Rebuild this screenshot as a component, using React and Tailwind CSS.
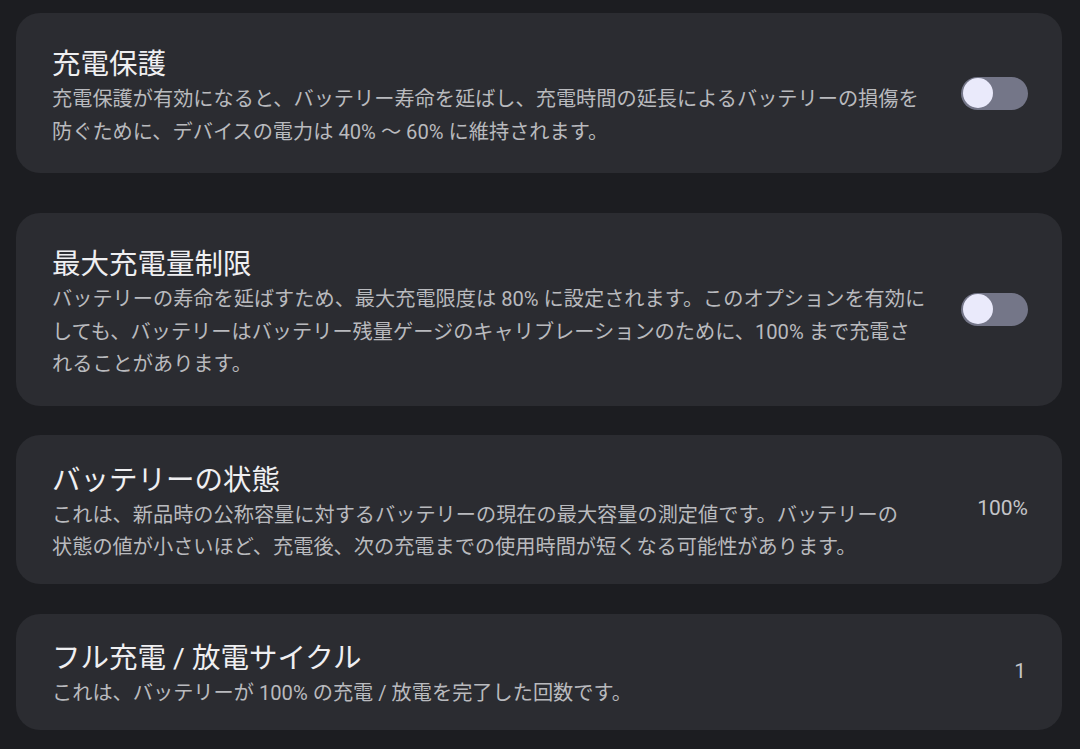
const font = { fontFamily: 'Roboto, "Noto Sans CJK JP", "Noto Sans", sans-serif' };

function Toggle() {
  return (
    <div className="relative h-[33px] w-[67px] shrink-0 rounded-full bg-[#747688]">
      <span className="absolute left-[2px] top-[1.5px] h-[30px] w-[30px] rounded-full bg-[#eaeafb]" />
    </div>
  );
}

function Card({ title, lines, right, className, pad }) {
  return (
    <div className={`flex items-center rounded-[24px] bg-[#2b2c31] pl-9 pr-[34px] ${className}`}>
      <div className={`min-w-0 flex-1 ${pad}`}>
        <div className="text-[28.5px] leading-[36px] text-[#efeff1]">{title}</div>
        <div className="whitespace-nowrap text-[20.2px] leading-[32.5px] text-[#b9babe]">
          {lines.map((l, i) => (
            <div key={i}>{l}</div>
          ))}
        </div>
      </div>
      {right}
    </div>
  );
}

export default function App() {
  return (
    <div className="min-h-screen bg-[#1c1d21] pb-[19px] pl-4 pr-[18px] pt-[13px]" style={font}>
      <Card
        pad="pb-[25px] pt-[34px]"
        title="充電保護"
        lines={[
          "充電保護が有効になると、バッテリー寿命を延ばし、充電時間の延長によるバッテリーの損傷を",
          "防ぐために、デバイスの電力は 40% 〜 60% に維持されます。",
        ]}
        right={<Toggle />}
      />
      <Card
        className="mt-[40px]"
        pad="pb-[25px] pt-[34px]"
        title="最大充電量制限"
        lines={[
          "バッテリーの寿命を延ばすため、最大充電限度は 80% に設定されます。このオプションを有効に",
          "しても、バッテリーはバッテリー残量ゲージのキャリブレーションのために、100% まで充電さ",
          "れることがあります。",
        ]}
        right={<Toggle />}
      />
      <Card
        className="mt-[29px]"
        pad="pb-[20px] pt-[28px]"
        title="バッテリーの状態"
        lines={[
          "これは、新品時の公称容量に対するバッテリーの現在の最大容量の測定値です。バッテリーの",
          "状態の値が小さいほど、充電後、次の充電までの使用時間が短くなる可能性があります。",
        ]}
        right={<span className="shrink-0 text-[21px] text-[#c4c5c9]">100%</span>}
      />
      <Card
        className="mt-[30px]"
        pad="pb-[21px] pt-[27px]"
        title="フル充電 / 放電サイクル"
        lines={["これは、バッテリーが 100% の充電 / 放電を完了した回数です。"]}
        right={<span className="shrink-0 pr-[2px] text-[21px] text-[#c4c5c9]">1</span>}
      />
    </div>
  );
}
